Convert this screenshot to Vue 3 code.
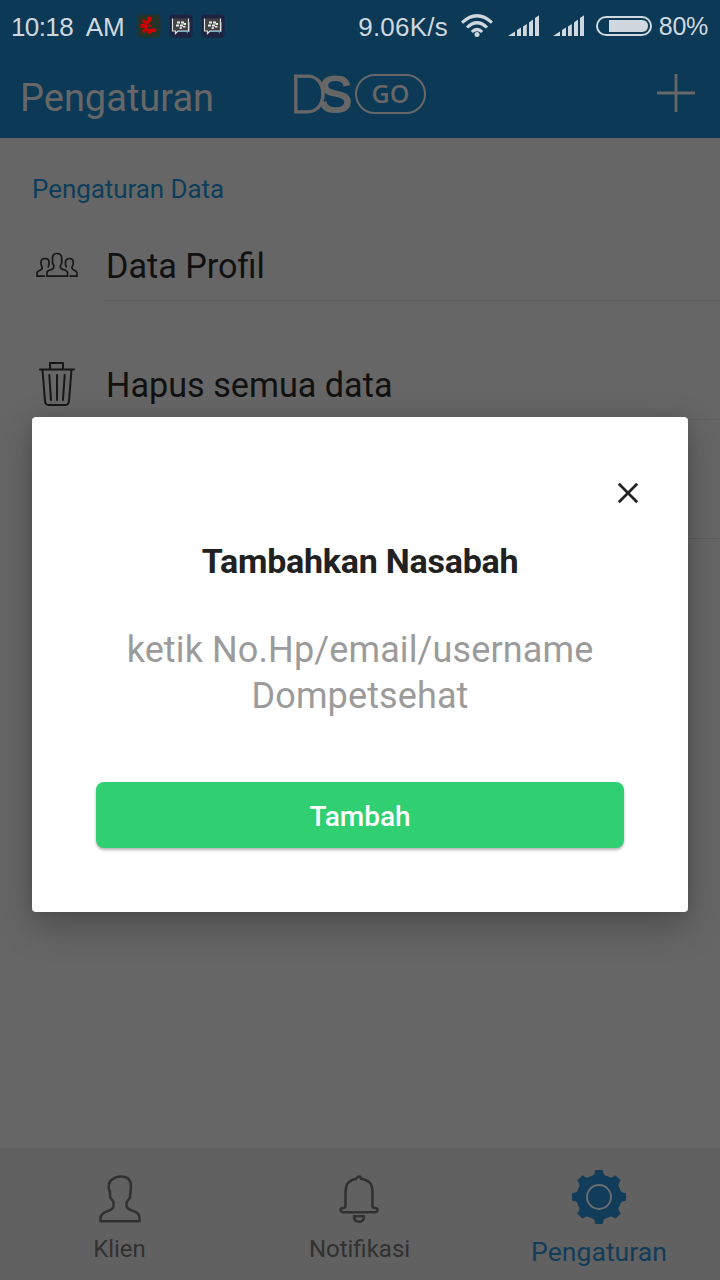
<script setup>
const notices = ['cherry', 'bbm', 'bbm']
const bars = [
  'M0 21L7 16.5V21Z',
  'M9 15L13 12.5V21H9Z',
  'M15 11.500L18.800 9V21H15Z',
  'M21 7.500L25 4.500V21H21Z',
  'M27 3L31 .3V21H27Z'
]
const gearTeeth = [0, 45, 90, 135, 180, 225, 270, 315]
</script>

<template>
  <div class="screen">
    <div class="status">
      <span class="time">10:18 <b>AM</b></span>
      <div class="notices">
        <svg v-for="(n, i) in notices" :key="i" width="24" height="24" viewBox="0 0 24 24">
          <template v-if="n === 'cherry'">
            <rect x=".5" y=".5" width="23" height="23" rx="4" fill="#263327" />
            <path d="M12 7.500A4.700 4.700 0 0 0 12 16.500H16" fill="none" stroke="#d00000" stroke-width="3" />
            <path d="M10.500 2.800H14.500V7.500H10.500ZM5.500 5.500H8.500V9H5.500ZM3.500 10H8V14H3.500ZM5.500 15.500H9V18.500H5.500ZM10.500 16H15V19.800H10.500ZM15 14.500H19V18H15Z" fill="#d00000" />
            <circle cx="12.800" cy="11.800" r="1.400" fill="#d00000" />
          </template>
          <template v-else>
            <rect x=".5" y=".5" width="23" height="23" rx="4" fill="#1d2340" />
            <path d="M7 8H21V18H19V20L17 18H9Z" fill="#1585c0" />
            <path d="M3.500 4.500H19.500V17H9L6.500 19.500V17H3.500Z" fill="#414141" />
            <path d="M19.500 4.500V17H9L6.500 19.500V17H3.500V4.500" fill="none" stroke="#dedede" stroke-width="1.200" />
            <path d="M8 7.500h3v2H8zM12 7.500h3v2h-3zM7 10.500h3v2H7zM11 10.500h3v2h-3zM14.500 9h2.500v2h-2.500zM10.500 13.300h2.500v1.500h-2.500zM14 12h2.500v1.500H14z" fill="#eee" />
          </template>
        </svg>
      </div>
      <div class="system">
        <span class="speed">9.06K/s</span>
        <svg class="wifi" width="32" height="24" viewBox="0 0 32 24" fill="none" stroke="#cfd8df" stroke-width="3.100">
          <path d="M1 8.700Q16-5.200 31 8.700" />
          <path d="M6 13.500Q16 4 26 13.500" />
          <path d="M10.800 18Q16 13 21.200 18" />
          <circle cx="16" cy="20.500" r="2.500" fill="#cfd8df" stroke="none" />
        </svg>
        <svg v-for="s in 2" :key="s" class="signal" width="31" height="21" viewBox="0 0 31 21" fill="#cfd8df">
          <path v-for="d in bars" :key="d" :d="d" />
        </svg>
        <svg width="56" height="20" viewBox="0 0 56 20">
          <rect x="1" y="1" width="54" height="18" rx="9" fill="none" stroke="#cfd8df" stroke-width="2" />
          <path d="M13 4H46Q52 4.500 52 10T46 16H13Z" fill="#cfd8df" />
        </svg>
        <span class="percent">80%</span>
      </div>
    </div>

    <header class="header">
      <h1>Pengaturan</h1>
      <svg class="logo" width="134" height="40" viewBox="0 0 134 40">
        <text y="39.200"><tspan class="logo-d" x="-3.800" textLength="38" lengthAdjust="spacingAndGlyphs">D</tspan><tspan class="logo-s" x="25.800" y="38">S</tspan></text>
        <rect x="63" y="1" width="69" height="38" rx="19" fill="none" stroke="#676767" stroke-width="2" />
        <text class="logo-go" x="78.500" y="28.500" textLength="38">GO</text>
      </svg>
      <svg class="plus" width="40" height="40" viewBox="0 0 40 40" fill="none" stroke="#676767" stroke-width="2.800">
        <path d="M1 20H39M20 1V39" />
      </svg>
    </header>

    <main class="content">
      <h2>Pengaturan Data</h2>
      <div class="row first">
        <svg width="42" height="26" viewBox="0 0 42 26" fill="none" stroke="#171717" stroke-width="1.700" stroke-linejoin="round">
          <path d="M11 24.200V20.500Q11 18.500 16 17.300Q18 16.500 18 14L16.500 11V6Q16.500 1.500 21 1.500T25.700 6V11L24.300 14Q24.300 16.500 26.500 17.300Q31.500 18.500 31.500 20.500V24.200Z" />
          <path d="M9 24.200H1V21Q1 19.500 4.500 18Q6.700 17 6 15L5 12.500V10Q5 6.500 9 6.500T13 10V12.500L12 15.500" />
          <path d="M33.500 24.200H41V21Q41 19.500 38 18Q35.500 17 36 15L37.200 12.500V10Q37.200 6.500 33.500 6.500T29.500 10V12.500L30.500 15.500" />
        </svg>
        <span>Data Profil</span>
      </div>
      <div class="row">
        <svg width="42" height="46" viewBox="0 0 42 46" fill="none" stroke="#171717" stroke-width="2" stroke-linecap="round">
          <path d="M4 8.500H38M14 8V2H27V8M6.500 9L9 40Q9.500 44 12.500 44H29.500Q32.500 44 33 40L35.500 9M13.300 14L15 39M21 14V39M28.700 14L27 39" />
        </svg>
        <span>Hapus semua data</span>
      </div>
      <div class="row"><svg width="42" height="46" /><span /></div>
    </main>

    <nav class="tabs">
      <div class="tab">
        <svg width="44" height="50" viewBox="0 0 44 50" fill="none" stroke="#313131" stroke-width="2.500" stroke-linejoin="round">
          <path d="M2.500 47.300H41.500V44.500Q41.500 38.500 34 36.500Q28.500 35 28.500 31V28.500L32 23.500L32.500 18L33 12.500Q33 2.500 23 2.500Q18 2.500 15 5Q10.700 7 10.700 12.500Q10.700 16 12 18V23L15.500 28V32Q15.500 35 10 37Q2.500 39 2.500 45Z" />
        </svg>
        <span>Klien</span>
      </div>
      <div class="tab">
        <svg class="bell" width="44" height="50" viewBox="0 0 44 50" fill="none" stroke="#313131" stroke-width="2.500" stroke-linejoin="round">
          <path d="M20 4.800Q8.500 6 8.500 18V32Q8.500 34 6 34Q3.500 34.300 3.500 36T6 38.200H38Q40.500 38 40.500 36T38 34Q35.500 34 35.500 32V18Q35.500 6 24 4.800Q24 2.400 22 2.400T20 4.800M17 42.200H27Q27 47.700 22 47.700T17 42.200Z" />
        </svg>
        <span>Notifikasi</span>
      </div>
      <div class="tab active">
        <svg width="54" height="54" viewBox="-27 -27 54 54" fill="#113d5a">
          <circle r="22.500" />
          <path v-for="a in gearTeeth" :key="a" d="M-8-20Q-4-22-4-26Q-4-27-3-27H3Q4-27 4-26Q4-22 8-20Z" :transform="`rotate(${a})`" />
          <circle r="12" fill="none" stroke="#6b6f71" stroke-width="1.800" />
        </svg>
        <span>Pengaturan</span>
      </div>
    </nav>

    <section class="dialog">
      <svg class="close" width="22" height="22" viewBox="0 0 22 22" fill="none" stroke="#212121" stroke-width="2.700">
        <path d="M1.800 1.800L20.200 20.200M20.200 1.800L1.800 20.200" />
      </svg>
      <h3>Tambahkan Nasabah</h3>
      <p>ketik No.Hp/email/username<br />Dompetsehat</p>
      <button>Tambah</button>
    </section>
  </div>
</template>

<style>
body {
  margin: 0;
}
</style>

<style scoped>
.screen {
  position: relative;
  display: flex;
  flex-direction: column;
  width: 720px;
  height: 1280px;
  overflow: hidden;
  background: #666;
  font-family: Roboto, sans-serif;
}
h1, h2, h3, p {
  margin: 0;
  font-weight: 400;
}
svg {
  flex: none;
}
.status {
  display: flex;
  align-items: center;
  box-sizing: border-box;
  height: 50px;
  padding: 1px 12px 0 11px;
  background: #0c3956;
  color: #cfd8df;
  font: 26px/30px "Liberation Sans", sans-serif;
}
.time {
  width: 126px;
  white-space: nowrap;
  padding-top: 2px;
  letter-spacing: -0.6px;
}
.time b {
  margin-left: 6px;
  font-weight: 400;
  letter-spacing: 0;
}
.notices {
  display: flex;
  gap: 8px;
}
.system {
  display: flex;
  align-items: center;
  margin-left: auto;
}
.speed {
  padding-top: 2px;
  margin-right: 13px;
  letter-spacing: 0.2px;
}
.wifi {
  margin-right: 15px;
}
.signal {
  margin-right: 14px;
}
.signal + svg:not(.signal) {
  margin-left: -2px;
}
.percent {
  margin-left: 7px;
  font-size: 25px;
  letter-spacing: -0.3px;
}
.header {
  display: flex;
  align-items: center;
  box-sizing: border-box;
  height: 88px;
  padding: 0 24px 0 20px;
  background: #0c3956;
}
h1 {
  width: 273px;
  padding-top: 8px;
  font-size: 38px;
  line-height: 44px;
  color: #676767;
  box-sizing: border-box;
}
.logo {
  overflow: visible;
}
.logo text {
  fill: #676767;
}
.logo-d {
  font: 300 54px Lato, sans-serif;
  stroke: #676767;
  stroke-width: 0.9px;
}
.logo-s {
  font: 400 50px "Liberation Sans", sans-serif;
  stroke: #676767;
  stroke-width: 2px;
}
.logo-go {
  font: 600 25px "Open Sans", sans-serif;
}
.plus {
  margin-left: auto;
  margin-bottom: 2px;
}
.content {
  flex: 1;
  padding-top: 38px;
}
h2 {
  padding-left: 32px;
  font-size: 26px;
  line-height: 26px;
  letter-spacing: -0.07px;
  color: #0e3d5c;
}
.row {
  display: flex;
  align-items: flex-end;
  height: 119px;
  padding-left: 36px;
}
.row.first {
  height: 99px;
}
.row svg {
  margin-bottom: 13px;
}
.row.first svg {
  margin-bottom: 23px;
}
.row span {
  flex: 1;
  height: 55px;
  margin-left: 26px;
  border-bottom: 1px solid #5d5d5d;
  font-size: 34.200px;
  line-height: 43px;
  text-indent: 2px;
  color: #111;
}
.tabs {
  display: flex;
  height: 132px;
  background: #616161;
}
.tab {
  display: flex;
  flex: 1;
  flex-direction: column;
  align-items: center;
  padding-top: 26px;
  font-size: 24px;
  line-height: 28px;
  color: #313131;
}
.tab span {
  margin-top: 11px;
  margin-right: 1px;
}
.bell {
  margin-right: 3px;
}
.tab.active {
  padding-top: 22px;
  font-size: 26.600px;
  color: #113d5a;
}
.tab.active svg {
  margin-right: 2px;
}
.tab.active span {
  margin-top: 14px;
  margin-right: 2px;
}
.dialog {
  position: absolute;
  left: 32px;
  top: 417px;
  display: flex;
  flex-direction: column;
  align-items: center;
  box-sizing: border-box;
  width: 656px;
  height: 495px;
  padding: 65px 64px 64px;
  border-radius: 4px;
  background: #fff;
  box-shadow: 0 13px 36px rgba(0, 0, 0, 0.26), 0 0 12px rgba(0, 0, 0, 0.08);
}
.close {
  align-self: flex-end;
  margin-right: -15px;
}
h3 {
  margin-top: 37px;
  font-size: 34px;
  font-weight: 700;
  line-height: 40px;
  letter-spacing: -0.24px;
  color: #212121;
}
p {
  margin-top: 46px;
  font-size: 36px;
  line-height: 46px;
  letter-spacing: 0.12px;
  text-align: center;
  color: #9b9b9b;
}
button {
  width: 528px;
  height: 66px;
  margin-top: auto;
  padding: 2px 0 0;
  border: 0;
  border-radius: 8px;
  background: #2fcf72;
  box-shadow: 0 2px 3px rgba(0, 0, 0, 0.3);
  color: #fff;
  font: 500 28px Roboto, sans-serif;
}
</style>
